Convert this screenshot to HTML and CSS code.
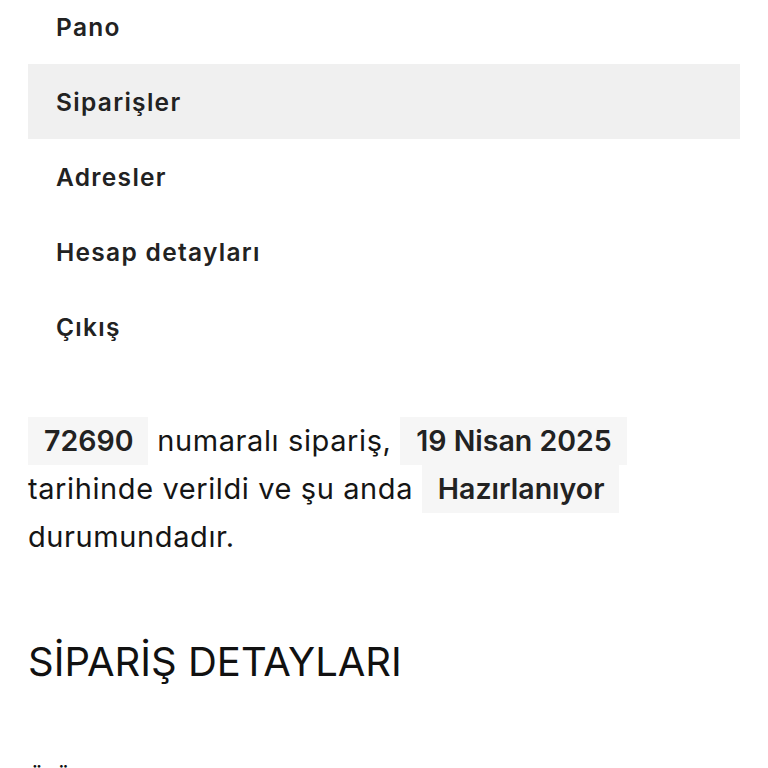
FILE: index.html
```html
<!DOCTYPE html>
<html lang="tr">
<head>
    <meta charset="UTF-8">
    <meta name="viewport" content="width=device-width, initial-scale=1.0">
    <title>Hesabım - Siparişler</title>
    <link rel="stylesheet" href="styles.css">
</head>
<body>
    <div class="account">
        <nav class="account-nav">
            <ul>
                <li class="nav-item"><a href="#">Pano</a></li>
                <li class="nav-item active"><a href="#">Siparişler</a></li>
                <li class="nav-item"><a href="#">Adresler</a></li>
                <li class="nav-item"><a href="#">Hesap detayları</a></li>
                <li class="nav-item"><a href="#">Çıkış</a></li>
            </ul>
        </nav>
        <div class="account-content">
            <p class="order-summary"><mark class="order-mark">72690</mark> numaralı sipariş, <mark class="order-mark">19 Nisan 2025</mark> tarihinde verildi ve şu anda <mark class="order-mark">Hazırlanıyor</mark> durumundadır.</p>
            <section class="order-details">
                <h2 class="order-details-title">SİPARİŞ DETAYLARI</h2>
                <table class="order-table">
                    <thead>
                        <tr>
                            <th class="product-name">ÜRÜN</th>
                            <th class="product-total">TOPLAM</th>
                        </tr>
                    </thead>
                </table>
            </section>
        </div>
    </div>
</body>
</html>
```

FILE: styles.css
```css
html,body{
    margin:0;
    padding:0;
    background-color:#fff;
    font-family: Inter, "Open Sans", sans-serif;
    color:#1a1a1a;
}
.account{
    padding:0 28px;
}
.account-nav ul{
    list-style:none;
    margin:-11px 0 0 0;
    padding:0;
}
.nav-item{
    height:75px;
    display:flex;
    align-items:center;
}
.nav-item a{
    padding-left:28px;
    font-size:24.5px;
    font-weight:600;
    color:#222;
    text-decoration:none;
    letter-spacing:1.3px;
}
.nav-item.active{
    background-color:#f0f0f0;
}
.order-summary{
    margin:53px 0 0 0;
    font-size:29px;
    line-height:48px;
    letter-spacing:0.6px;
    color:#151515;
}
.order-mark{
    display:inline-block;
    line-height:48px;
    padding:0 15px 0 16px;
    background-color:#f6f6f6;
    color:#222;
    font-size:28.5px;
    font-weight:600;
    letter-spacing:0;
}
.order-details-title{
    margin:76px 0 0 0;
    font-size:40px;
    font-weight:400;
    line-height:50px;
    color:#111;
}
.order-table{
    width:100%;
    margin-top:78px;
    border-collapse:collapse;
}
.order-table th{
    padding:0 2px;
    font-size:19px;
    font-weight:700;
    text-align:left;
    color:#111;
}
.order-table .product-total{
    text-align:right;
    padding-right:4px;
    color:#ddd;
}
```
